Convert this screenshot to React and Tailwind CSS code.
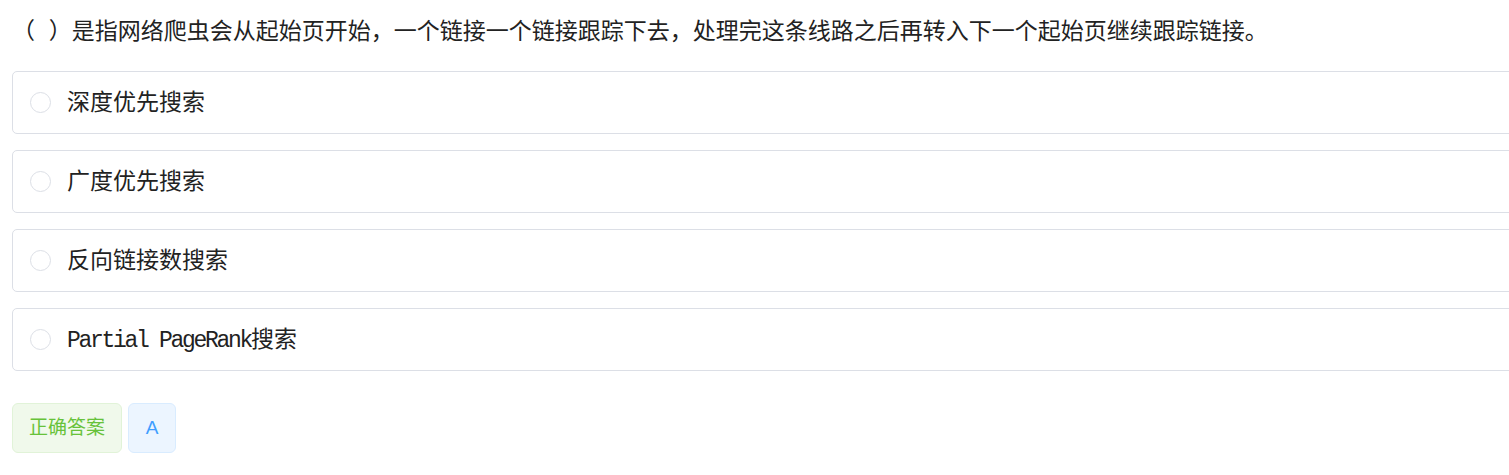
const options = [
  { key: 'A', label: '深度优先搜索' },
  { key: 'B', label: '广度优先搜索' },
  { key: 'C', label: '反向链接数搜索' },
  { key: 'D', latin: 'Partial PageRank', label: '搜索' },
]

function Radio() {
  return <span className="h-[21px] w-[21px] shrink-0 rounded-full border border-[#dcdfe6] bg-white" />
}

function OptionCard({ option }) {
  return (
    <label className="flex h-[63px] w-[1530px] cursor-pointer items-center rounded-[5px] border border-[#dcdfe6] bg-white pl-[17px]">
      <Radio />
      <span className="ml-[16px] pt-[4px] text-[23px] leading-none text-[#222]">
        {option.latin ? <span className="tracking-[-2.3px]">{option.latin}</span> : null}
        {option.label}
      </span>
    </label>
  )
}

export default function App() {
  return (
    <div
      className="min-h-screen w-full overflow-hidden bg-white"
      style={{ fontFamily: '"Liberation Mono", "Noto Sans CJK SC", monospace' }}
    >
      <div className="px-3 pt-[18px]">
        <p className="text-[23px] leading-[30px] text-[#222]">（ ）是指网络爬虫会从起始页开始，一个链接一个链接跟踪下去，处理完这条线路之后再转入下一个起始页继续跟踪链接。</p>

        <div className="mt-[23px] flex flex-col gap-[16px]">
          {options.map((option) => (
            <OptionCard key={option.key} option={option} />
          ))}
        </div>

        <div
          className="mt-[32px] flex gap-[6px]"
          style={{ fontFamily: '"Liberation Sans", "Noto Sans CJK SC", sans-serif' }}
        >
          <span className="flex h-[50px] items-center rounded-[6px] border border-[#e1f3d8] bg-[#f0f9eb] px-[16px] text-[19px] text-[#67c23a]">
            正确答案
          </span>
          <span className="flex h-[50px] w-[48px] items-center justify-center rounded-[6px] border border-[#d9ecff] bg-[#ecf5ff] text-[19px] text-[#409eff]">
            A
          </span>
        </div>
      </div>
    </div>
  )
}
